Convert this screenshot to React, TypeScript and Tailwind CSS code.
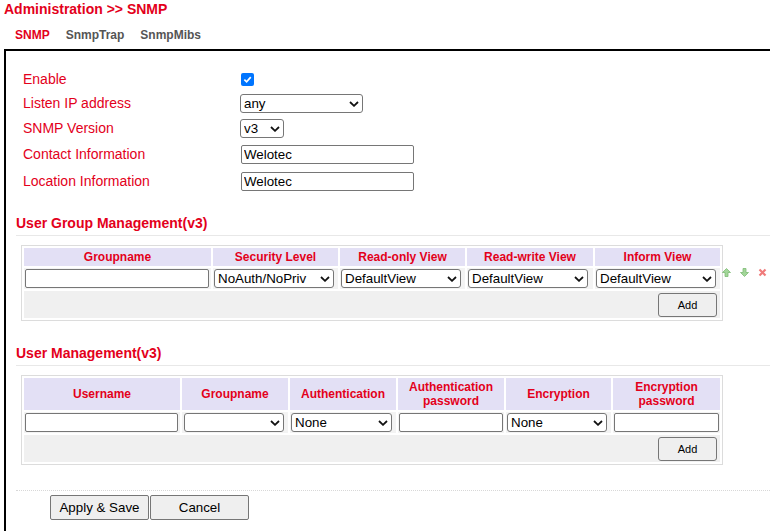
import React from "react";

const font = { fontFamily: '"Liberation Sans", Arial, sans-serif' };

function Select({ value, className }: { value: string; className: string }) {
  return (
    <div className={"relative " + className}>
      <select
        defaultValue={value}
        className="block h-[19px] w-full appearance-none rounded-[3px] border border-[#767676] bg-white pl-[3px] pr-[16px] text-[13.33px] leading-[17px] text-black outline-none"
      >
        <option value={value}>{value}</option>
      </select>
      <svg
        className="pointer-events-none absolute right-[4px] top-[7px] h-[6px] w-[10px]"
        viewBox="0 0 10 6"
      >
        <path d="M1 1 L5 4.8 L9 1" stroke="#111" strokeWidth="1.8" fill="none" />
      </svg>
    </div>
  );
}

function TextInput({ value, className }: { value?: string; className: string }) {
  return (
    <input
      type="text"
      defaultValue={value}
      className={
        "block h-[19px] rounded-[2px] border border-[#767676] bg-white px-[2px] text-[13.33px] leading-[17px] text-black outline-none " +
        className
      }
    />
  );
}

function Checkbox() {
  return (
    <div className="ml-px flex h-[13px] w-[13px] items-center justify-center rounded-[2px] bg-[#0075ff]">
      <svg viewBox="0 0 10 10" className="h-[9px] w-[9px]">
        <path d="M1.5 5.2 L4 7.6 L8.6 2.4" stroke="#fff" strokeWidth="1.9" fill="none" />
      </svg>
    </div>
  );
}

function AddButton() {
  return (
    <button className="h-[24px] w-[59px] rounded-[3px] border border-[#767676] bg-[#efefef] text-[11px] text-black">
      Add
    </button>
  );
}

function RowIcons() {
  return (
    <div className="-ml-px mt-[23px] flex gap-[9px]">
      <svg viewBox="0 0 9 9" className="h-[9px] w-[9px]">
        <path d="M4.5 0.5 L8.5 4.5 L6 4.5 L6 8.5 L3 8.5 L3 4.5 L0.5 4.5 Z" fill="#a3d69a" stroke="#7dbb74" strokeWidth="0.8" />
      </svg>
      <svg viewBox="0 0 9 9" className="h-[9px] w-[9px]">
        <path d="M4.5 8.5 L8.5 4.5 L6 4.5 L6 0.5 L3 0.5 L3 4.5 L0.5 4.5 Z" fill="#a3d69a" stroke="#7dbb74" strokeWidth="0.8" />
      </svg>
      <svg viewBox="0 0 9 9" className="h-[9px] w-[9px]">
        <path d="M1.5 1.5 L7.5 7.5 M7.5 1.5 L1.5 7.5" stroke="#f07b7b" strokeWidth="2.2" />
      </svg>
    </div>
  );
}

function SectionHeading({ title, className }: { title: string; className: string }) {
  return (
    <h2
      className={
        "border-b border-[#e8e8e8] pb-[3px] text-[14px] font-bold leading-[18px] text-[#e3001b] " + className
      }
    >
      {title}
    </h2>
  );
}

const th = "bg-[#e3e0f5] p-0 text-center align-middle text-[12px] font-bold leading-[14px] text-[#e3001b]";
const td = "bg-[#f3f3f3] h-[21px] px-[2px] py-0 align-middle";

function GroupTable() {
  return (
    <div className="ml-[5px] mt-[9px] flex items-start">
      <table className="w-[702px] table-fixed border-separate border-spacing-[2px] border border-[#dcdcdc]">
        <thead>
          <tr className="h-[18px]">
            <th className={th + " w-[187px]"}>Groupname</th>
            <th className={th + " w-[125px]"}>Security Level</th>
            <th className={th + " w-[125px]"}>Read-only View</th>
            <th className={th + " w-[126px]"}>Read-write View</th>
            <th className={th + " w-[125px]"}>Inform View</th>
          </tr>
        </thead>
        <tbody>
          <tr>
            <td className={td + " pl-px"}>
              <TextInput className="w-full" />
            </td>
            <td className={td + " pl-px"}>
              <Select value="NoAuth/NoPriv" className="w-[120px]" />
            </td>
            <td className={td + " pl-px"}>
              <Select value="DefaultView" className="w-[120px]" />
            </td>
            <td className={td + " pl-px"}>
              <Select value="DefaultView" className="w-[120px]" />
            </td>
            <td className={td + " pl-px"}>
              <Select value="DefaultView" className="w-[120px]" />
            </td>
          </tr>
          <tr>
            <td colSpan={5} className="h-[27px] bg-[#f0f0f0] p-0 pr-[3px] text-right align-middle">
              <AddButton />
            </td>
          </tr>
        </tbody>
      </table>
      <RowIcons />
    </div>
  );
}

function UserTable() {
  return (
    <div className="ml-[5px] mt-[9px]">
      <table className="w-[702px] table-fixed border-separate border-spacing-[2px] border border-[#dcdcdc]">
        <thead>
          <tr className="h-[32px]">
            <th className={th + " w-[156px]"}>Username</th>
            <th className={th + " w-[106px]"}>Groupname</th>
            <th className={th + " w-[106px]"}>Authentication</th>
            <th className={th + " w-[106px]"}>
              Authentication
              <br />
              password
            </th>
            <th className={th + " w-[105px]"}>Encryption</th>
            <th className={th + " w-[107px]"}>
              Encryption
              <br />
              password
            </th>
          </tr>
        </thead>
        <tbody>
          <tr>
            <td className={td + " pl-px"}>
              <TextInput className="w-full" />
            </td>
            <td className={td}>
              <Select value="" className="w-[100px]" />
            </td>
            <td className={td + " pl-px"}>
              <Select value="None" className="w-[101px]" />
            </td>
            <td className={td + " pl-px pr-px"}>
              <TextInput className="w-full" />
            </td>
            <td className={td + " pl-px"}>
              <Select value="None" className="w-[100px]" />
            </td>
            <td className={td + " pl-px pr-px"}>
              <TextInput className="w-full" />
            </td>
          </tr>
          <tr>
            <td colSpan={6} className="h-[27px] bg-[#f0f0f0] p-0 pr-[3px] text-right align-middle">
              <AddButton />
            </td>
          </tr>
        </tbody>
      </table>
    </div>
  );
}

function FormRow({ label, h, children }: { label: string; h: string; children: React.ReactNode }) {
  return (
    <div className={"flex items-center " + h}>
      <div className="w-[217px] text-[14px] leading-[16px] text-[#e3001b]">{label}</div>
      {children}
    </div>
  );
}

export default function App() {
  return (
    <div className="flex h-[531px] w-[770px] flex-col overflow-hidden bg-white" style={font}>
      <h1 className="pl-1 text-[14px] font-bold leading-[18px] text-[#e3001b]">Administration &gt;&gt; SNMP</h1>
      <div className="mt-[8px] flex h-[18px] items-center gap-[16px] pl-[15px] text-[12px] font-bold">
        <span className="text-[#e3001b]">SNMP</span>
        <span className="text-[#555555]">SnmpTrap</span>
        <span className="text-[#555555]">SnmpMibs</span>
      </div>
      <div className="ml-[4px] mt-[5px] w-[800px] flex-1 border-l-2 border-t-2 border-black">
        <div className="pl-[17px] pt-[16px]">
          <FormRow label="Enable" h="h-[24px]">
            <Checkbox />
          </FormRow>
          <FormRow label="Listen IP address" h="h-[24px]">
            <Select value="any" className="w-[123px]" />
          </FormRow>
          <FormRow label="SNMP Version" h="h-[26px]">
            <Select value="v3" className="w-[44px]" />
          </FormRow>
          <FormRow label="Contact Information" h="h-[26px]">
            <TextInput value="Welotec" className="ml-px w-[173px]" />
          </FormRow>
          <FormRow label="Location Information" h="h-[28px]">
            <TextInput value="Welotec" className="ml-px w-[173px]" />
          </FormRow>
        </div>

        <div className="pl-[10px]">
          <SectionHeading title="User Group Management(v3)" className="mt-[19px]" />
          <GroupTable />

          <SectionHeading title="User Management(v3)" className="mt-[23px]" />
          <UserTable />

          <div className="mt-[25px] border-t border-dotted border-[#d8d8d8]" />
          <div className="ml-[34px] mt-[4px] flex gap-px">
            <button className="h-[25px] w-[99px] rounded-[2px] border border-[#767676] bg-[#efefef] text-[13.33px] text-black">
              Apply &amp; Save
            </button>
            <button className="h-[25px] w-[99px] rounded-[2px] border border-[#767676] bg-[#efefef] text-[13.33px] text-black">
              Cancel
            </button>
          </div>
        </div>
      </div>
    </div>
  );
}
